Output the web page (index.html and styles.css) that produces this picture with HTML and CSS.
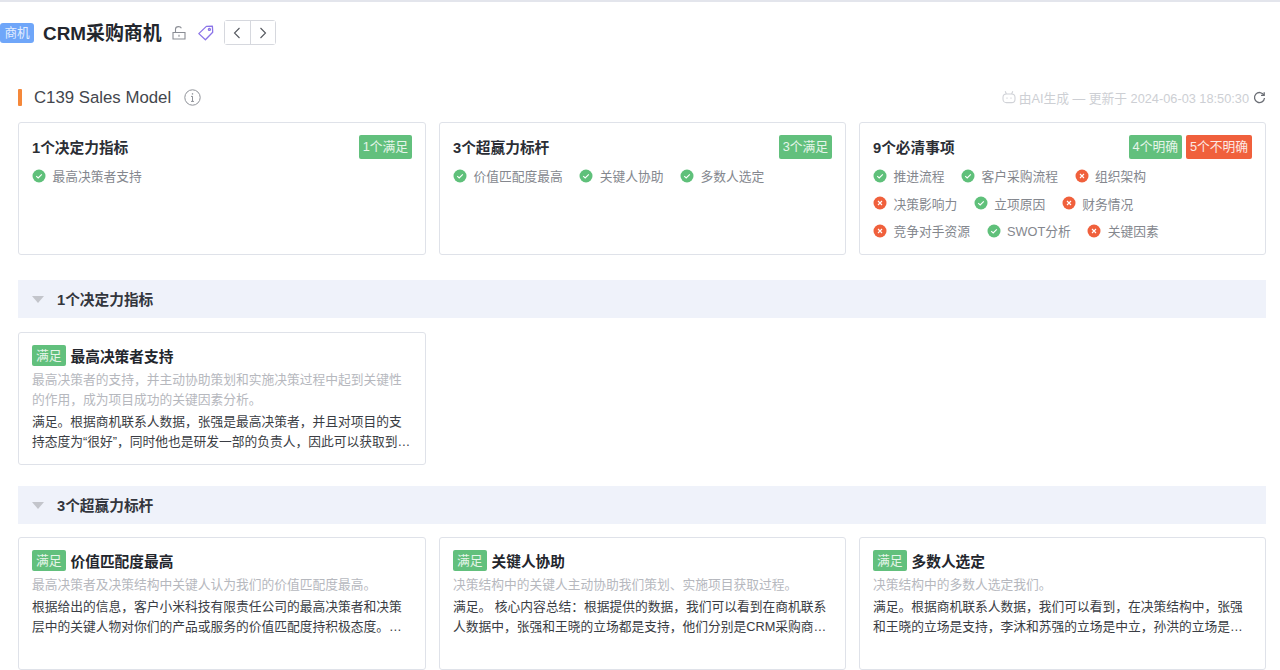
FILE: index.html
```html
<!DOCTYPE html>
<html lang="zh-CN">
  <head>
    <meta charset="UTF-8" />
    <title>CRM采购商机</title>
    <link rel="stylesheet" href="styles.css">
  </head>
  <body>
    <header class="page-head">
      <span class="type-tag">商机</span>
      <h1 class="page-title">CRM采购商机</h1>
      <svg class="head-icon" width="16" height="16" viewBox="0 0 16 16" fill="none" stroke="#8a8d94" stroke-width="1.1">
        <path d="M2 7.5h12v6.5H2z" />
        <path d="M4.5 7.5V4.2C4.5 2.6 5.9 1.6 7.6 1.6c1.3 0 2.3.6 2.8 1.6" />
        <path d="M8 9.8v2" />
      </svg>
      <svg class="head-icon head-icon--tag" width="18" height="18" viewBox="0 0 18 18" fill="none" stroke="#8b74e8" stroke-width="1.3">
        <path d="M1.8 9.6 9.4 2.4l6-.2.3 6-7.3 7.6z" stroke-linejoin="round" />
        <circle cx="12.4" cy="5.4" r="1" />
      </svg>
      <div class="pager">
        <button class="pager__btn">
          <svg width="8" height="12" viewBox="0 0 8 12" fill="none" stroke="#55585f" stroke-width="1.1"><path d="M6.5 1 1.5 6l5 5" /></svg>
        </button>
        <button class="pager__btn">
          <svg width="8" height="12" viewBox="0 0 8 12" fill="none" stroke="#55585f" stroke-width="1.1"><path d="M1.5 1l5 5-5 5" /></svg>
        </button>
      </div>
    </header>

    <main class="content">
      <div class="model-head">
        <span class="model-bar"></span>
        <h2 class="model-title">C139 Sales Model</h2>
        <svg class="model-info" width="17" height="17" viewBox="0 0 17 17" fill="none" stroke="#8f9299" stroke-width="1">
          <circle cx="8.5" cy="8.5" r="7.7" />
          <path d="M8.5 7.2v5.2M7 7.4h1.5M7 12.4h3" />
          <path d="M8.5 4.2v1.4" stroke-width="1.3" />
        </svg>
        <div class="model-meta">
          <svg width="14" height="14" viewBox="0 0 14 14" fill="none" stroke="#d0d2d7" stroke-width="1.1">
            <rect x="1" y="4" width="12" height="8.6" rx="3.4" />
            <path d="M4.4 4 3.2 1.2M9.6 4l1.2-2.8M5 7.6v1.2M9 7.6v1.2" />
          </svg>
          <span>由AI生成 — 更新于 2024-06-03 18:50:30</span>
          <svg class="model-refresh" width="13" height="13" viewBox="0 0 13 13" fill="none" stroke="#6b6e75" stroke-width="1.3">
            <path d="M10.9 4.1A5 5 0 1 0 11.5 7" />
            <path d="M11.2 1.2v3.2H8" />
          </svg>
        </div>
      </div>

      <div class="grid grid--summary">
        <section class="card">
          <div class="card__top">
            <h3 class="card__title">1个决定力指标</h3>
            <span class="badge badge--ok">1个满足</span>
          </div>
          <ul class="status-list">
            <li class="status"><svg class="status__icon"><use href="#ok" /></svg>最高决策者支持</li>
          </ul>
        </section>
        <section class="card">
          <div class="card__top">
            <h3 class="card__title">3个超赢力标杆</h3>
            <span class="badge badge--ok">3个满足</span>
          </div>
          <ul class="status-list">
            <li class="status"><svg class="status__icon"><use href="#ok" /></svg>价值匹配度最高</li>
            <li class="status"><svg class="status__icon"><use href="#ok" /></svg>关键人协助</li>
            <li class="status"><svg class="status__icon"><use href="#ok" /></svg>多数人选定</li>
          </ul>
        </section>
        <section class="card">
          <div class="card__top">
            <h3 class="card__title">9个必清事项</h3>
            <span class="badge badge--ok">4个明确</span>
            <span class="badge badge--bad">5个不明确</span>
          </div>
          <ul class="status-list">
            <li class="status"><svg class="status__icon"><use href="#ok" /></svg>推进流程</li>
            <li class="status"><svg class="status__icon"><use href="#ok" /></svg>客户采购流程</li>
            <li class="status"><svg class="status__icon"><use href="#bad" /></svg>组织架构</li>
            <li class="status-break"></li>
            <li class="status"><svg class="status__icon"><use href="#bad" /></svg>决策影响力</li>
            <li class="status"><svg class="status__icon"><use href="#ok" /></svg>立项原因</li>
            <li class="status"><svg class="status__icon"><use href="#bad" /></svg>财务情况</li>
            <li class="status-break"></li>
            <li class="status"><svg class="status__icon"><use href="#bad" /></svg>竞争对手资源</li>
            <li class="status"><svg class="status__icon"><use href="#ok" /></svg>SWOT分析</li>
            <li class="status"><svg class="status__icon"><use href="#bad" /></svg>关键因素</li>
          </ul>
        </section>
      </div>

      <div class="group-head">
        <span class="group-head__arrow"></span>
        <h3 class="group-head__title">1个决定力指标</h3>
      </div>
      <div class="grid">
        <section class="card">
          <div class="detail__top">
            <span class="badge badge--ok">满足</span>
            <h4 class="detail__title">最高决策者支持</h4>
          </div>
          <p class="detail__desc">最高决策者的支持，并主动协助策划和实施决策过程中起到关键性的作用，成为项目成功的关键因素分析。</p>
          <p class="detail__text">满足。根据商机联系人数据，张强是最高决策者，并且对项目的支持态度为“很好”，同时他也是研发一部的负责人，因此可以获取到他的支持和帮助来推进项目。</p>
        </section>
      </div>

      <div class="group-head group-head--second">
        <span class="group-head__arrow"></span>
        <h3 class="group-head__title">3个超赢力标杆</h3>
      </div>
      <div class="grid">
        <section class="card">
          <div class="detail__top">
            <span class="badge badge--ok">满足</span>
            <h4 class="detail__title">价值匹配度最高</h4>
          </div>
          <p class="detail__desc">最高决策者及决策结构中关键人认为我们的价值匹配度最高。</p>
          <p class="detail__text">根据给出的信息，客户小米科技有限责任公司的最高决策者和决策层中的关键人物对你们的产品或服务的价值匹配度持积极态度。他们认为产品能够满足业务需求并带来价值。</p>
        </section>
        <section class="card">
          <div class="detail__top">
            <span class="badge badge--ok">满足</span>
            <h4 class="detail__title">关键人协助</h4>
          </div>
          <p class="detail__desc">决策结构中的关键人主动协助我们策划、实施项目获取过程。</p>
          <p class="detail__text">满足。 核心内容总结：根据提供的数据，我们可以看到在商机联系人数据中，张强和王晓的立场都是支持，他们分别是CRM采购商机的最高决策者和关键影响者，并愿意协助推进。</p>
        </section>
        <section class="card">
          <div class="detail__top">
            <span class="badge badge--ok">满足</span>
            <h4 class="detail__title">多数人选定</h4>
          </div>
          <p class="detail__desc">决策结构中的多数人选定我们。</p>
          <p class="detail__text">满足。根据商机联系人数据，我们可以看到，在决策结构中，张强和王晓的立场是支持，李沐和苏强的立场是中立，孙洪的立场是反对，因此多数人选定了我们的方案和产品。</p>
        </section>
      </div>
    </main>

    <svg class="icon-defs" width="0" height="0">
      <symbol id="ok" viewBox="0 0 14 14">
        <circle cx="7" cy="7" r="6.5" fill="#5fc07a" />
        <path d="M4.2 7.2 6.2 9l3.6-3.6" fill="none" stroke="#fff" stroke-width="1.1" />
      </symbol>
      <symbol id="bad" viewBox="0 0 14 14">
        <circle cx="7" cy="7" r="6.5" fill="#f0603c" />
        <path d="M5 5l4 4M9 5l-4 4" fill="none" stroke="#fff" stroke-width="1.1" />
      </symbol>
    </svg>
  </body>
</html>
```

FILE: styles.css
```css
* {
  margin: 0;
  padding: 0;
  box-sizing: border-box;
}
html,
body {
  height: 670px;
  overflow: hidden;
}
body {
  font-family: "Liberation Sans", "Noto Sans CJK SC", sans-serif;
  font-size: 12.75px;
  color: #2b2e35;
  background: #fff;
  border-top: 2px solid #e3e5ec;
  padding-top: 1px;
}
ul {
  list-style: none;
}
.icon-defs {
  display: block;
}

/* Head */
.page-head {
  display: flex;
  align-items: center;
  height: 25px;
  margin-top: 17px;
}
.type-tag {
  width: 34px;
  height: 20px;
  line-height: 20px;
  text-align: center;
  color: #e3edff;
  background: #6fa6f9;
  border-radius: 3px;
  font-size: 12.6px;
}
.page-title {
  font-size: 18.9px;
  font-weight: 700;
  color: #23262d;
  margin-left: 9px;
  padding-bottom: 3px;
}
.head-icon {
  margin-left: 9px;
}
.head-icon--tag {
  margin-left: 10px;
}
.pager {
  display: flex;
  height: 25px;
  margin-left: 9px;
  border: 1px solid #d6d8de;
  border-radius: 3px;
}
.pager__btn {
  width: 25px;
  background: #fff;
  border: none;
  display: flex;
  align-items: center;
  justify-content: center;
}
.pager__btn + .pager__btn {
  border-left: 1px solid #d6d8de;
}

/* Content */
.content {
  padding: 0 14px 0 18px;
}
.model-head {
  display: flex;
  align-items: center;
  height: 18px;
  margin-top: 43px;
}
.model-bar {
  width: 4px;
  height: 17px;
  background: #f5883a;
  border-radius: 1px;
}
.model-title {
  font-size: 16.8px;
  font-weight: 400;
  color: #43464d;
  margin-left: 12px;
  padding-top: 2px;
}
.model-info {
  margin-left: 13px;
}
.model-meta {
  display: flex;
  align-items: center;
  gap: 3px;
  margin-left: auto;
  color: #cdcfd4;
}
.model-refresh {
  margin-left: 1px;
}

.grid {
  display: grid;
  grid-template-columns: 408px 1fr 1fr;
  gap: 13px;
}
.grid--summary {
  margin-top: 16px;
}
.card {
  height: 133px;
  padding: 12px 13px;
  border: 1px solid #dfe2e9;
  border-radius: 3px;
  background: #fff;
}
.card__top {
  display: flex;
  align-items: center;
  gap: 4px;
  height: 24px;
}
.card__title {
  font-size: 14.7px;
  font-weight: 700;
  color: #2b2e35;
  margin-right: auto;
  padding-bottom: 1px;
}
.badge {
  flex: none;
  height: 24px;
  line-height: 24px;
  padding: 0 4px;
  color: #e6f5ea;
  font-size: 12.75px;
  border-radius: 2px;
}
.badge--ok {
  background: #62c07d;
}
.badge--bad {
  background: #f0603c;
  color: #fde9e3;
}

.status-list {
  display: flex;
  flex-wrap: wrap;
  margin-top: 3px;
}
.status {
  display: flex;
  align-items: center;
  height: 27.5px;
  margin-right: 16.5px;
  color: #84878e;
}
.status-break {
  flex-basis: 100%;
  height: 0;
}
.status__icon {
  width: 14px;
  height: 14px;
  margin-right: 6.5px;
}

/* Groups */
.group-head {
  display: flex;
  align-items: center;
  height: 38px;
  margin: 25px 0 14px;
  padding-left: 14px;
  background: #eff2fa;
}
.group-head--second {
  margin-top: 21px;
  margin-bottom: 13px;
}
.group-head__arrow {
  width: 0;
  height: 0;
  border-left: 6px solid transparent;
  border-right: 6px solid transparent;
  border-top: 7px solid #c3c5cb;
}
.group-head__title {
  font-size: 14.7px;
  font-weight: 700;
  color: #33363d;
  margin-left: 13px;
  padding-bottom: 1px;
}

/* Detail cards */
.detail__top {
  display: flex;
  align-items: center;
  gap: 5px;
  height: 21px;
}
.detail__top .badge {
  height: 21px;
  line-height: 21px;
}
.detail__title {
  font-size: 14.7px;
  font-weight: 700;
  color: #23262d;
  padding-bottom: 1px;
}
.detail__desc {
  margin-top: 4px;
  line-height: 19.5px;
  color: #b6b8be;
}
.detail__text {
  margin-top: 2.5px;
  line-height: 20px;
  color: #3a3d44;
  display: -webkit-box;
  -webkit-box-orient: vertical;
  -webkit-line-clamp: 2;
  overflow: hidden;
}
```
